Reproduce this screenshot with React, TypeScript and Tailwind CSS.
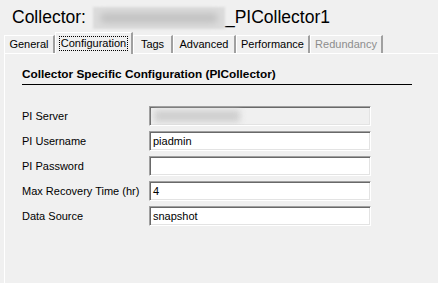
import React from "react";

const tabs = [
  { title: "General", w: "w-[51px]" },
  { title: "Configuration", w: "w-[78px]", active: true },
  { title: "Tags", w: "w-[40px]" },
  { title: "Advanced", w: "w-[63px]" },
  { title: "Performance", w: "w-[74px]" },
  { title: "Redundancy", w: "w-[73px]", disabled: true },
];

const fields = [
  { label: "PI Server", value: "", blurred: true },
  { label: "PI Username", value: "piadmin" },
  { label: "PI Password", value: "" },
  { label: "Max Recovery Time (hr)", value: "4" },
  { label: "Data Source", value: "snapshot" },
];

function Field({ label, value, blurred }: { label: string; value: string; blurred?: boolean }) {
  return (
    <div className="flex items-center h-[20px]">
      <div className="w-[127px] text-[11px] text-black">{label}</div>
      <div
        className={
          "w-[222px] h-[20px] border border-t-[#a0a0a0] border-l-[#a0a0a0] border-b-white border-r-white shadow-[inset_1px_1px_0_#696969,inset_-1px_-1px_0_#e3e3e3] flex items-center pl-[3px] text-[11px] text-black overflow-hidden " +
          (blurred ? "bg-[#f0f0f0]" : "bg-white")
        }
      >
        {blurred ? (
          <div className="ml-[1px] w-[86px] h-[12px] bg-[#cfcfcf] blur-[3px]" />
        ) : (
          value
        )}
      </div>
    </div>
  );
}

export default function App() {
  return (
    <div
      className="w-[438px] h-[283px] bg-[#f0f0f0] overflow-hidden flex flex-col"
      style={{ fontFamily: '"Liberation Sans", Arial, sans-serif' }}
    >
      <div className="h-[32px] flex items-center pl-[12px] pt-[3px] text-[17.5px] text-black">
        <span>Collector:</span>
        <div className="ml-[7px] w-[132px] h-[22px] bg-[#dcdcdc] blur-[1px] flex items-center justify-center">
          <div className="w-[118px] h-[10px] rounded-full bg-[#c2c2c2] blur-[3px]" />
        </div>
        <span>_PICollector1</span>
      </div>

      <div className="flex items-end pl-[4px] h-[21px] relative z-10">
        {tabs.map((t) =>
          t.active ? (
            <div
              key={t.title}
              className={
                t.w +
                " h-[22px] -mb-px bg-[#f0f0f0] border-t border-l border-white border-r-2 border-r-[#a0a0a0] flex items-center justify-center text-[11px] text-black"
              }
            >
              <span className="border border-dotted border-black px-[1px] leading-[13px]">{t.title}</span>
            </div>
          ) : (
            <div
              key={t.title}
              className={
                t.w +
                " h-[18px] border-t border-l border-white border-r-2 border-r-[#a0a0a0] flex items-center justify-center text-[11px] " +
                (t.disabled ? "text-[#8d8d8d]" : "text-black")
              }
            >
              {t.title}
            </div>
          )
        )}
      </div>

      <div className="flex-1 ml-[4px] border-t border-l border-white pt-[12px] pl-[17px]">
        <div className="w-[390px] border-b border-black pb-[2px] text-[11.8px] font-bold text-black leading-[16px]">
          Collector Specific Configuration (PICollector)
        </div>
        <div className="mt-[21px] flex flex-col gap-[5px]">
          {fields.map((f) => (
            <Field key={f.label} {...f} />
          ))}
        </div>
      </div>
    </div>
  );
}
